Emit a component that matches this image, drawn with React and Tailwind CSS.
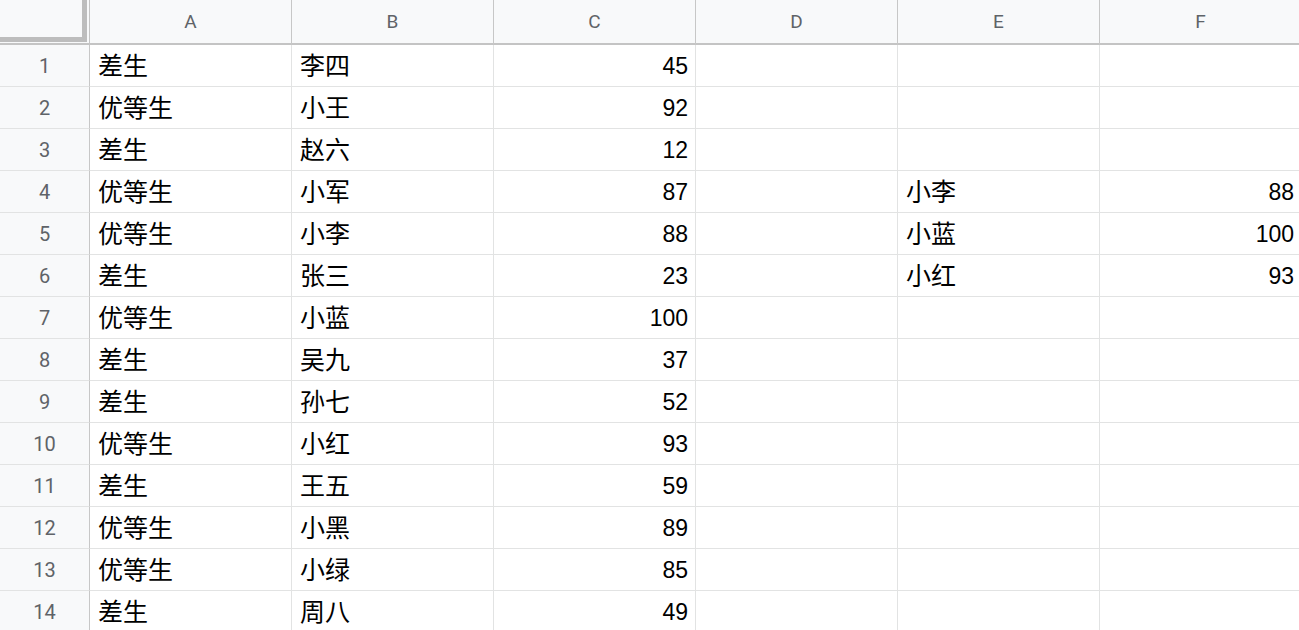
import React from 'react';

const cols = ['A', 'B', 'C', 'D', 'E', 'F'];

const rows = [
  ['差生', '李四', 45, '', '', ''],
  ['优等生', '小王', 92, '', '', ''],
  ['差生', '赵六', 12, '', '', ''],
  ['优等生', '小军', 87, '', '小李', 88],
  ['优等生', '小李', 88, '', '小蓝', 100],
  ['差生', '张三', 23, '', '小红', 93],
  ['优等生', '小蓝', 100, '', '', ''],
  ['差生', '吴九', 37, '', '', ''],
  ['差生', '孙七', 52, '', '', ''],
  ['优等生', '小红', 93, '', '', ''],
  ['差生', '王五', 59, '', '', ''],
  ['优等生', '小黑', 89, '', '', ''],
  ['优等生', '小绿', 85, '', '', ''],
  ['差生', '周八', 49, '', '', ''],
];

const font = { fontFamily: '"Liberation Sans", Arial, "Noto Sans CJK SC", sans-serif' };
const headFont = { fontFamily: 'Roboto, "Liberation Sans", sans-serif' };

export default function App() {
  return (
    <div className="w-[1299px] h-[630px] overflow-hidden bg-white">
      <div className="grid grid-cols-[90px_repeat(6,202px)] w-max">
        {/* corner */}
        <div className="h-[45px] bg-[#f8f9fa] border-r border-r-[#c4c4c4] border-b-2 border-b-[#c4c4c4] flex items-start justify-start">
          <div className="w-[87px] h-[42px] border-r-[5px] border-b-[5px] border-[#bdbdbd]" />
        </div>
        {cols.map((c) => (
          <div
            key={c}
            className="h-[45px] pt-[2px] bg-[#f8f9fa] border-r border-r-[#c7c7c7] border-b-2 border-b-[#c4c4c4] flex items-center justify-center text-[19px] text-[#5f6368]"
            style={headFont}
          >
            {c}
          </div>
        ))}

        {rows.map((r, i) => (
          <React.Fragment key={i}>
            <div
              className="h-[42px] bg-[#f8f9fa] border-r border-r-[#c7c7c7] border-b border-b-[#e2e3e3] flex items-center justify-center text-[20px] text-[#5f6368]"
              style={headFont}
            >
              {i + 1}
            </div>
            {r.map((v, j) => (
              <div
                key={j}
                className={`h-[42px] pt-[2px] border-r border-b border-[#e2e3e3] flex items-center text-black ${
                  typeof v === 'number'
                    ? 'justify-end pr-[7px] text-[23px]'
                    : 'justify-start pl-[8px] text-[25px]'
                }`}
                style={font}
              >
                {v}
              </div>
            ))}
          </React.Fragment>
        ))}
      </div>
    </div>
  );
}
